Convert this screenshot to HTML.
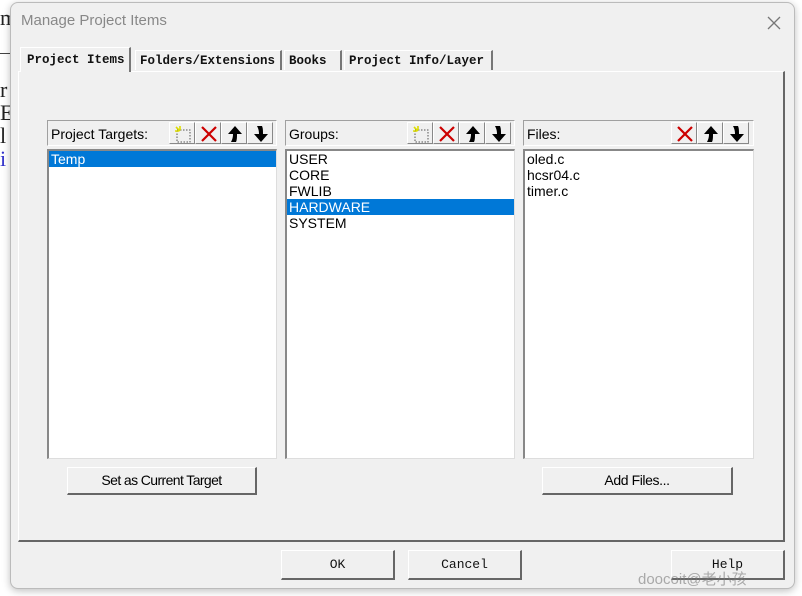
<!DOCTYPE html><html><head><style>
body{margin:0;width:802px;height:596px;background:#fff;position:relative;overflow:hidden;font-family:"Liberation Sans",sans-serif;}
.a{position:absolute}
.win{left:10px;top:2px;width:783px;height:585px;background:#f0f0f0;border:1px solid #bbb;border-radius:8px;box-shadow:0 2px 8px rgba(0,0,0,.25)}
.mono{font-family:"Liberation Mono",monospace;font-size:12.5px;font-weight:bold;color:#111}
.tab{top:50px;height:20px;border-top:1px solid #fff;border-left:1px solid #fff;border-right:2px solid #777;line-height:20px;padding-left:4px;box-sizing:border-box}
.hdr{height:26px;background:#f0f0f0;border-top:1px solid #a0a0a0;border-left:1px solid #a0a0a0;border-right:1px solid #fff;border-bottom:1px solid #fff;box-sizing:border-box;font-size:14px;line-height:26px;padding-left:3px;color:#000}
.list{background:#fff;border-top:2px solid #888;border-left:2px solid #888;border-right:1px solid #ddd;border-bottom:1px solid #ddd;box-sizing:border-box;font-size:14px;line-height:16px;color:#000}
.list div{padding-left:2px}
.sel{background:#0078d7;color:#fff}
.tb{top:1px;width:26px;height:22px;border-top:1px solid #fff;border-left:1px solid #fff;border-right:1px solid #888;border-bottom:1px solid #888;box-sizing:border-box}
.tb svg{position:absolute;left:4px;top:2px}
.btn{border-top:1px solid #fff;border-left:1px solid #fff;border-right:2px solid #666;border-bottom:2px solid #666;box-sizing:border-box;background:#f0f0f0;text-align:center;font-size:14px;color:#000}
.bm{font-family:"Liberation Mono",monospace;font-size:13px;color:#111}
</style></head><body>
<div class="a" style="left:0;top:0;font-family:'Liberation Serif',serif;font-size:22px;line-height:23px;color:#222">
<div style="position:absolute;top:6px">m</div>
<div style="position:absolute;top:78px">r</div>
<div style="position:absolute;top:101px">E</div>
<div style="position:absolute;top:124px">l</div>
<div style="position:absolute;top:147px;color:#33c">i</div>
<div style="position:absolute;left:0;top:53px;width:10px;height:1px;background:#444"></div>
</div>
<div class="a win">
<div class="a" style="left:10px;top:9px;font-size:15px;color:#888">Manage Project Items</div>
<svg class="a" style="left:756px;top:13px" width="14" height="14"><path d="M1 1L13 13M13 1L1 13" stroke="#777" stroke-width="1.3"/></svg>
</div>
<div class="a" style="left:18px;top:71px;width:767px;height:471px;border-top:1px solid #fff;border-left:1px solid #fff;border-right:2px solid #666;border-bottom:2px solid #666;box-sizing:border-box"></div>
<div class="a tab mono" style="left:20px;top:47px;width:111px;height:25px;background:#f0f0f0;line-height:24px;padding-left:6px">Project Items</div>
<div class="a tab mono" style="left:135px;width:147px">Folders/Extensions</div>
<div class="a tab mono" style="left:284px;width:58px">Books</div>
<div class="a tab mono" style="left:344px;width:149px">Project Info/Layer</div>

<svg width="0" height="0" style="position:absolute"><defs>
<g id="nw"><rect x="3" y="5" width="13" height="12" fill="none" stroke="#555" stroke-dasharray="1.5 1.5"/><path d="M2 2l4 4M6 1v4M1 6h4" stroke="#dd0" stroke-width="1.6"/></g>
<g id="x"><path d="M2 2L16 16M16 2L2 16" stroke="#c00" stroke-width="2.2"/></g>
<g id="up"><path d="M9 1L2 9h5c0 4-1 6-2 8h5c1-2 1-5 1-8h5z" fill="#000"/></g>
<g id="dn"><path d="M9 17L2 9h5c0-4-1-6-2-8h5c1 2 1 5 1 8h5z" fill="#000"/></g>
</defs></svg>

<div class="a hdr" style="left:47px;top:120px;width:230px">Project Targets:
<div class="a tb" style="left:121px"><svg width="18" height="18"><use href="#nw"/></svg></div>
<div class="a tb" style="left:147px"><svg width="18" height="18"><use href="#x"/></svg></div>
<div class="a tb" style="left:173px"><svg width="18" height="18"><use href="#up"/></svg></div>
<div class="a tb" style="left:199px"><svg width="18" height="18"><use href="#dn"/></svg></div></div>
<div class="a list" style="left:47px;top:149px;width:230px;height:310px"><div class="sel">Temp</div></div>

<div class="a hdr" style="left:285px;top:120px;width:230px">Groups:
<div class="a tb" style="left:121px"><svg width="18" height="18"><use href="#nw"/></svg></div>
<div class="a tb" style="left:147px"><svg width="18" height="18"><use href="#x"/></svg></div>
<div class="a tb" style="left:173px"><svg width="18" height="18"><use href="#up"/></svg></div>
<div class="a tb" style="left:199px"><svg width="18" height="18"><use href="#dn"/></svg></div></div>
<div class="a list" style="left:285px;top:149px;width:230px;height:310px"><div>USER</div><div>CORE</div><div>FWLIB</div><div class="sel">HARDWARE</div><div>SYSTEM</div></div>

<div class="a hdr" style="left:523px;top:120px;width:231px">Files:
<div class="a tb" style="left:147px"><svg width="18" height="18"><use href="#x"/></svg></div>
<div class="a tb" style="left:173px"><svg width="18" height="18"><use href="#up"/></svg></div>
<div class="a tb" style="left:199px"><svg width="18" height="18"><use href="#dn"/></svg></div></div>
<div class="a list" style="left:523px;top:149px;width:231px;height:310px"><div>oled.c</div><div>hcsr04.c</div><div>timer.c</div></div>

<div class="a btn" style="left:67px;top:467px;width:190px;height:28px;line-height:25px;letter-spacing:-0.6px">Set as Current Target</div>
<div class="a btn" style="left:542px;top:467px;width:191px;height:28px;line-height:25px;letter-spacing:-0.4px">Add Files...</div>

<div class="a btn bm" style="left:281px;top:550px;width:114px;height:30px;line-height:28px">OK</div>
<div class="a btn bm" style="left:408px;top:550px;width:114px;height:30px;line-height:28px">Cancel</div>
<div class="a btn bm" style="left:671px;top:550px;width:114px;height:30px;line-height:28px">Help</div>
<div class="a" style="left:638px;top:568px;font-size:15px;color:rgba(120,120,120,.6);font-family:'Liberation Sans','Noto Sans CJK SC',sans-serif">doocoit@老小孩</div>
</body></html>
